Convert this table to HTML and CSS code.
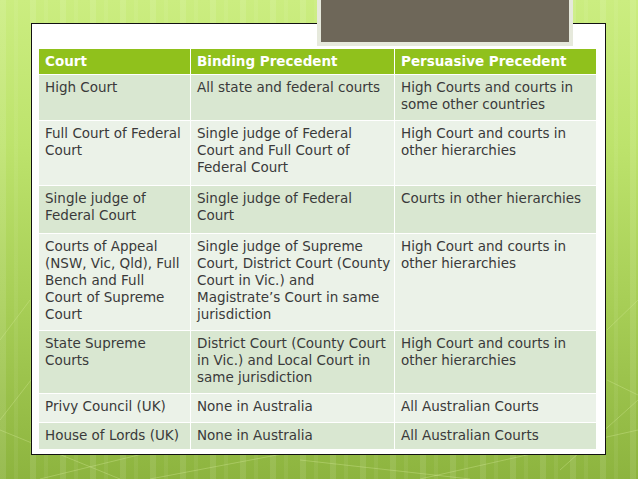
FILE: index.html
```html
<!DOCTYPE html>
<html>
<head>
<meta charset="utf-8">
<link rel="stylesheet" href="styles.css">
</head>
<body>
<div class="slide">
  <svg class="deco" width="638" height="479" viewBox="0 0 638 479" aria-hidden="true">
    <g stroke="#d6ec9c" stroke-opacity="0.35" stroke-width="1" fill="none">
      <line x1="0" y1="430" x2="120" y2="479"/>
      <line x1="40" y1="479" x2="200" y2="440"/>
      <line x1="150" y1="479" x2="330" y2="445"/>
      <line x1="300" y1="460" x2="470" y2="479"/>
      <line x1="420" y1="479" x2="638" y2="430"/>
      <line x1="560" y1="470" x2="638" y2="400"/>
      <line x1="0" y1="340" x2="30" y2="300"/>
      <line x1="0" y1="420" x2="31" y2="380"/>
      <line x1="607" y1="330" x2="638" y2="300"/>
      <line x1="607" y1="380" x2="638" y2="395"/>
    </g>
  </svg>
  <div class="photo-frame"></div>
  <div class="panel">
    <table class="courts">
      <colgroup>
        <col class="c1"><col class="c2"><col class="c3">
      </colgroup>
      <thead>
        <tr class="head">
          <th>Court</th>
          <th>Binding Precedent</th>
          <th>Persuasive Precedent</th>
        </tr>
      </thead>
      <tbody>
        <tr class="dark r1">
          <td>High Court</td>
          <td>All state and federal courts</td>
          <td>High Courts and courts in<br>some other countries</td>
        </tr>
        <tr class="light r2">
          <td>Full Court of Federal<br>Court</td>
          <td>Single judge of Federal<br>Court and Full Court of<br>Federal Court</td>
          <td>High Court and courts in<br>other hierarchies</td>
        </tr>
        <tr class="dark r3">
          <td>Single judge of<br>Federal Court</td>
          <td>Single judge of Federal<br>Court</td>
          <td>Courts in other hierarchies</td>
        </tr>
        <tr class="light r4">
          <td>Courts of Appeal<br>(NSW, Vic, Qld), Full<br>Bench and Full<br>Court of Supreme<br>Court</td>
          <td>Single judge of Supreme<br>Court, District Court (County<br>Court in Vic.) and<br>Magistrate’s Court in same<br>jurisdiction</td>
          <td>High Court and courts in<br>other hierarchies</td>
        </tr>
        <tr class="dark r5">
          <td>State Supreme<br>Courts</td>
          <td>District Court (County Court<br>in Vic.) and Local Court in<br>same jurisdiction</td>
          <td>High Court and courts in<br>other hierarchies</td>
        </tr>
        <tr class="light r6">
          <td>Privy Council (UK)</td>
          <td>None in Australia</td>
          <td>All Australian Courts</td>
        </tr>
        <tr class="dark r7">
          <td>House of Lords (UK)</td>
          <td>None in Australia</td>
          <td>All Australian Courts</td>
        </tr>
      </tbody>
    </table>
  </div>
</div>
</body>
</html>
```

FILE: styles.css
```css
html, body {
  margin: 0;
  padding: 0;
}
body {
  width: 638px;
  height: 479px;
  overflow: hidden;
  font-family: "DejaVu Sans", "Liberation Sans", sans-serif;
}
.slide {
  position: relative;
  width: 638px;
  height: 479px;
  padding-top: 23px;
  box-sizing: border-box;
  background:
    repeating-linear-gradient(90deg, rgba(255,255,255,0.10) 0 6px, rgba(255,255,255,0) 6px 14px, rgba(255,255,255,0.06) 14px 18px, rgba(255,255,255,0) 18px 30px),
    linear-gradient(180deg, #cbed80 0%, #bde36c 30%, #a6cd55 65%, #8db43f 100%);
}
.deco {
  position: absolute;
  left: 0;
  top: 0;
}
.photo-frame {
  position: absolute;
  left: 317px;
  top: 0;
  width: 248px;
  height: 42px;
  background: #6e6759;
  border: 4px solid #e6e9dc;
  border-top: 0;
  z-index: 2;
}
.panel {
  position: relative;
  z-index: 1;
  box-sizing: border-box;
  margin-left: 31px;
  width: 575px;
  height: 432px;
  background: #ffffff;
  border: 1px solid #111;
  padding: 24px 0 0 6px;
}
.courts {
  width: 558px;
  border-collapse: collapse;
  table-layout: fixed;
  font-size: 13.5px;
  color: #3a3a3a;
}
.c1 { width: 152px; }
.c2 { width: 204px; }
.c3 { width: 202px; }
.courts th, .courts td {
  border: 1px solid #fff;
  text-align: left;
  vertical-align: top;
  white-space: nowrap;
  padding: 4px 4px 0 6px;
  line-height: 17px;
}
.courts th {
  background: #90c11c;
  color: #fff;
  font-weight: bold;
  font-size: 13.5px;
  height: 21px;
  padding-top: 4px;
  padding-bottom: 0;
}
.dark td { background: #d9e7d1; }
.light td { background: #ebf2e8; }
.r1 td { height: 41px; }
.r2 td { height: 60px; }
.r3 td { height: 43px; }
.r4 td { height: 92px; }
.r5 td { height: 58px; }
.r6 td { height: 24px; }
.r7 td { height: 22px; }
```
